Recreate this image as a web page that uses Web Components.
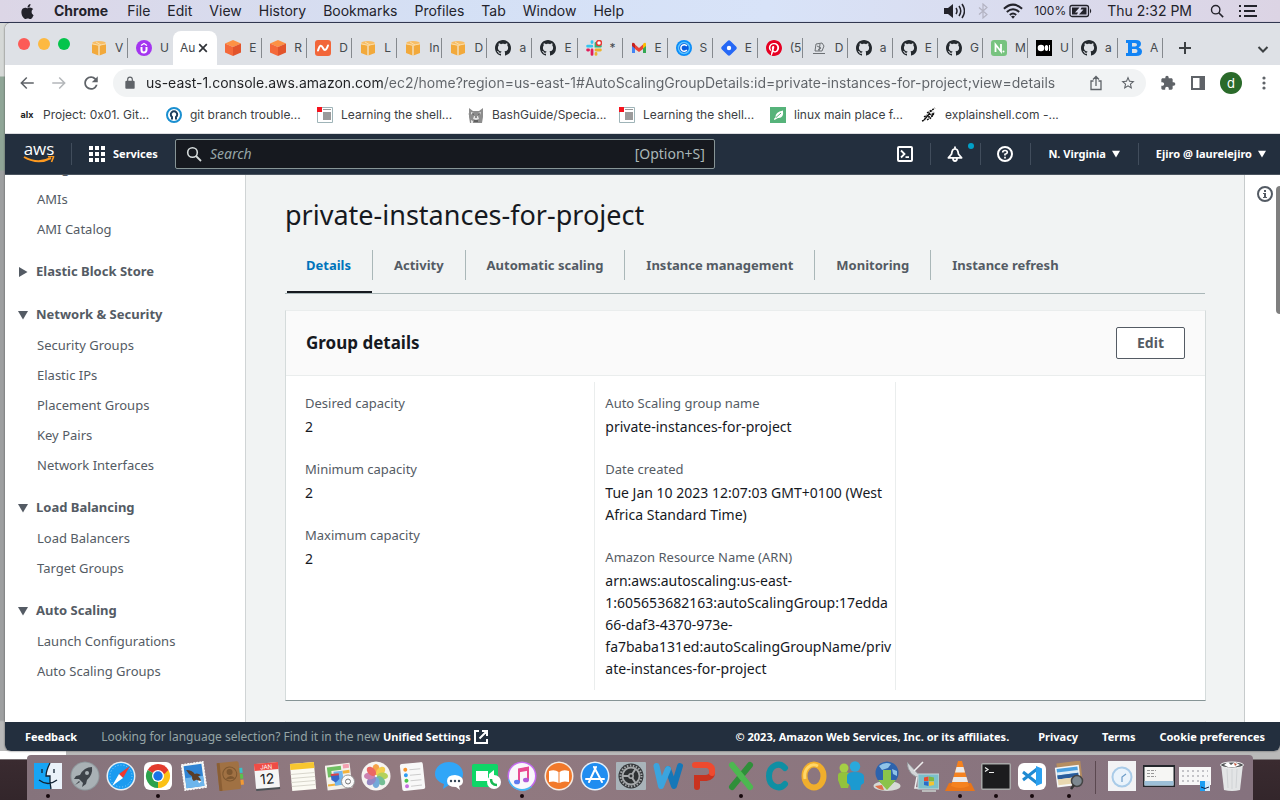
<!DOCTYPE html>
<html lang="en">
<head>
<meta charset="utf-8">
<title>private-instances-for-project | Auto Scaling groups</title>
<style>
html{height:100%}
body{margin:0;height:100vh;display:flex;flex-direction:column;overflow:hidden;
  font:13px/20px Inter,"Noto Sans",sans-serif;color:#16191f;
  background:linear-gradient(90deg,#fff 0 66px,transparent 66px) 0 751px/100% 8px no-repeat,linear-gradient(#d5d8d6 0 76px,#8fa596 77px 170px,#9d9fa0 171px 720px,#b9b9b9 722px 759px,#3a2b30 760px,#33262b)}
browser-window{flex:1;min-height:0;margin-left:5px}
mac-dock{margin:4px 27px 0}
</style>
</head>
<body>
<mac-menubar></mac-menubar>
<browser-window>
  <tab-strip slot="chrome"></tab-strip>
  <browser-toolbar slot="chrome"></browser-toolbar>
  <bookmark-bar slot="chrome"></bookmark-bar>
  <aws-header></aws-header>
  <aws-layout>
    <side-nav slot="nav"></side-nav>
    <group-page></group-page>
  </aws-layout>
  <aws-footer></aws-footer>
</browser-window>
<mac-dock></mac-dock>

<script>
const ICONS = {
apple:[24,'<path fill="#23232b" d="M12.152 6.896c-.948 0-2.415-1.078-3.96-1.04-2.04.027-3.91 1.183-4.961 3.014-2.117 3.675-.546 9.103 1.519 12.09 1.013 1.454 2.208 3.09 3.792 3.039 1.52-.065 2.09-.987 3.935-.987 1.831 0 2.35.987 3.96.948 1.637-.026 2.676-1.48 3.676-2.948 1.156-1.688 1.636-3.325 1.662-3.415-.039-.013-3.182-1.221-3.22-4.857-.026-3.04 2.48-4.494 2.597-4.559-1.429-2.09-3.623-2.324-4.39-2.376-2-.156-3.675 1.09-4.61 1.09zM15.53 3.83c.843-1.012 1.4-2.427 1.245-3.83-1.207.052-2.662.805-3.532 1.818-.78.896-1.454 2.338-1.273 3.714 1.338.104 2.715-.688 3.559-1.701"/>'],
volume:[22,'<path fill="#23232b" d="M1 8h4l5-4v14l-5-4H1z"/><g fill="none" stroke="#23232b" stroke-width="1.500"><path d="M13 8q2 3 0 6M16 6q3.500 5 0 10M19 4q5 7 0 14"/></g>'],
bluetooth:[16,'<path fill="none" stroke="#b3b3c2" stroke-width="1.200" d="M4 4.500l8 7L8 15V1l4 3.500-8 7"/>'],
wifi:[22,'<g fill="none" stroke="#23232b" stroke-width="2.200"><path d="M1 8.500q10-9 20 0M4.200 12q6.800-6 13.600 0M7.500 15.300q3.500-3 7 0"/></g><path fill="#23232b" d="M8.800 17l2.200 2.500 2.200-2.500q-2.200-1.700-4.400 0z"/>'],
battery:[24,'<rect x="1" y="6.500" width="18.500" height="11" rx="2" fill="none" stroke="#23232b" stroke-width="1.300"/><path fill="#23232b" d="M3 8.500h7.500l-4.500 5h3l-1 2H3zM17.500 15.500H10l4.500-5h-3l1-2h5zM21 9.500q2.500 2.500 0 5z"/>'],
search:[16,'<circle cx="6.500" cy="6.500" r="4.800" fill="none" stroke="currentColor" stroke-width="1.600"/><path stroke="currentColor" stroke-width="1.800" d="M10 10l5 5"/>'],
menu:[18,'<path fill="#23232b" d="M0 3h2v2H0zM5 3h13v2H5zM0 8h2v2H0zM5 8h11v2H5zM0 13h2v2H0zM5 13h13v2H5z"/>'],
github:[16,'<path fill="#24292e" d="M8 0C3.58 0 0 3.58 0 8c0 3.54 2.29 6.53 5.47 7.59.4.07.55-.17.55-.38 0-.19-.01-.82-.01-1.49-2.01.37-2.53-.49-2.69-.94-.09-.23-.48-.94-.82-1.13-.28-.15-.68-.52-.01-.53.63-.01 1.08.58 1.23.82.72 1.21 1.87.87 2.33.66.07-.52.28-.87.51-1.07-1.78-.2-3.64-.89-3.64-3.95 0-.87.31-1.59.82-2.15-.08-.2-.36-1.02.08-2.12 0 0 .67-.21 2.2.82.64-.18 1.32-.27 2-.27.68 0 1.36.09 2 .27 1.53-1.04 2.2-.82 2.2-.82.44 1.1.16 1.92.08 2.12.51.56.82 1.27.82 2.15 0 3.07-1.87 3.75-3.65 3.95.29.25.54.73.54 1.48 0 1.07-.01 1.93-.01 2.2 0 .21.15.46.55.38A8.013 8.013 0 0016 8c0-4.42-3.58-8-8-8z"/>'],
aws:[16,'<path fill="#f7bd65" d="M1 3.500Q1 1 8 1t7 2.500L8 6z"/><path fill="#f2a93b" d="M1 4l6.500 1.500V15.500L1 13zM15 4L8.500 5.500V15.500L15 13z"/><path stroke="#fbdca6" fill="none" d="M1 3.800L8 5.300l7-1.500M8 5.300V16M5 2l5 3"/>'],
ec2:[16,'<path fill="#fd9144" d="M8 0l8 3.500L8 7 0 3.500z"/><path fill="#f4693a" d="M0 3.500L8 7v9l-8-3.500z"/><path fill="#e2542c" d="M16 3.500L8 7v9l8-3.500z"/>'],
udemy:[16,'<circle cx="8" cy="8" r="8" fill="#a435f0"/><path fill="none" stroke="#fff" stroke-width="2" d="M5.500 7v3a2.500 2.500 0 005 0V7"/><path fill="none" stroke="#fff" stroke-width="1.200" d="M5 5.500l3-2 3 2"/>'],
nami:[16,'<rect width="16" height="16" rx="3" fill="#f2663a"/><path fill="none" stroke="#fff" stroke-width="2" stroke-linecap="round" d="M3 10.500C5 4 6.500 5 8 8s3 3 5-2.500"/>'],
slack:[16,'<g stroke-width="2.800" stroke-linecap="round"><path stroke="#36c5f0" d="M6 1.600v1M1.600 6.200h4.200"/><path stroke="#2eb67d" fill="none" d="M10 3.500v2.700h4.400"/><path stroke="#e01e5a" d="M6 10v4.400M1.600 10h1"/><path stroke="#ecb22e" d="M10 14.400v-1M10 10h4.400"/></g><circle cx="13" cy="3" r="2.500" fill="#fff" stroke="#e53935" stroke-width="1.500"/>'],
gmail:[16,'<path fill="#4285f4" d="M1 4v9h3V6z"/><path fill="#34a853" d="M15 4v9h-3V6z"/><path fill="#ea4335" d="M4 9V4.500L8 8l4-3.500V9l-4 3z"/><path fill="#c5221f" d="M1 4q0-2 2-1l1 1v4.500L1 6z"/><path fill="#fbbc04" d="M15 4q0-2-2-1l-1 1v4.500L15 6z"/>'],
calendly:[16,'<circle cx="8" cy="8" r="8" fill="#0a8cf8"/><circle cx="8" cy="8" r="5.500" fill="#0a5cdf" stroke="#5cc4ff" stroke-width="1.500"/><path fill="none" stroke="#fff" stroke-width="1.500" d="M10.800 6a3.300 3.300 0 100 4"/>'],
jira:[16,'<rect x="2" y="2" width="12" height="12" rx="2" fill="#2668f6" transform="rotate(45 8 8)"/><circle cx="8" cy="8" r="2.200" fill="#fff"/>'],
pinterest:[24,'<circle cx="12" cy="12" r="11" fill="#fff"/><path fill="#e60023" d="M12 0C5.373 0 0 5.372 0 12c0 5.084 3.163 9.426 7.627 11.174-.105-.949-.2-2.405.042-3.441.218-.937 1.407-5.965 1.407-5.965s-.359-.719-.359-1.782c0-1.668.967-2.914 2.171-2.914 1.023 0 1.518.769 1.518 1.69 0 1.029-.655 2.568-.994 3.995-.283 1.194.599 2.169 1.777 2.169 2.133 0 3.772-2.249 3.772-5.495 0-2.873-2.064-4.882-5.012-4.882-3.414 0-5.418 2.561-5.418 5.207 0 1.031.397 2.138.893 2.738.098.119.112.224.083.345l-.333 1.36c-.053.22-.174.267-.402.161-1.499-.698-2.436-2.889-2.436-4.649 0-3.785 2.75-7.262 7.929-7.262 4.163 0 7.398 2.967 7.398 6.931 0 4.136-2.607 7.464-6.227 7.464-1.216 0-2.359-.631-2.75-1.378l-.748 2.853c-.271 1.043-1.002 2.35-1.492 3.146C9.57 23.812 10.763 24 12 24c6.627 0 12-5.373 12-12 0-6.628-5.373-12-12-12z"/>'],
sketch:[16,'<g fill="none" stroke="#6c7074"><path d="M2 13.500h12M4 11l1-7 6-1 2 3-2 5zM6 6l4 2-3 2M9 4l-1 7"/></g>'],
nlet:[16,'<rect width="16" height="16" rx="3" fill="#77c37f"/><path stroke="#fff" stroke-width="1.800" fill="none" d="M4.500 12V4.500l5.500 7V4"/><circle cx="12.500" cy="11.500" r="1" fill="#fff"/>'],
medium:[16,'<rect width="16" height="16" fill="#000"/><circle cx="5" cy="8" r="3.300" fill="#fff"/><ellipse cx="10.500" cy="8" rx="1.700" ry="3" fill="#fff"/><path stroke="#fff" d="M13.500 5v6"/>'],
bmark:[16,'<path fill="#1183f5" fill-rule="evenodd" d="M0 0h10q5 0 5 4 0 2.500-2.500 3.500Q16 8.500 16 11.500 16 16 10 16H0v-3h2V3H0zM6 3v3.500h3q2 0 2-1.700T9 3zM6 9v4h3.500q2 0 2-2T9.500 9z"/>'],
close:[10,'<path stroke="#303338" stroke-width="1.700" d="M1.200 1.200l7.600 7.600M8.800 1.200L1.200 8.800"/>'],
plus:[14,'<path stroke="#3c4043" stroke-width="2" d="M7 1v12M1 7h12"/>'],
chevron:[12,'<path fill="none" stroke="#3c4043" stroke-width="2" d="M1.500 4L6 8.500 10.500 4"/>'],
back:[24,'<path fill="currentColor" d="M21 11H6.830l5.590-5.590L11 4l-8 8 8 8 1.410-1.410L6.830 13H21z"/>'],
forward:[24,'<path fill="#b4b7ba" d="M3 11h14.170l-5.590-5.590L13 4l8 8-8 8-1.410-1.410L17.170 13H3z"/>'],
reload:[24,'<path fill="currentColor" d="M18.500 5.500A9 9 0 0012 3c-5 0-9 4-9 9s4 9 9 9c4.200 0 7.700-2.900 8.700-6.800h-2.400A6.700 6.700 0 0112 18.700 6.700 6.700 0 1112 5.300c1.900 0 3.600.8 4.800 2L13 11h8V3z"/>'],
lock:[24,'<path fill="#5f6368" d="M18 8h-1V6A5 5 0 007 6v2H6a2 2 0 00-2 2v10c0 1.100.9 2 2 2h12a2 2 0 002-2V10a2 2 0 00-2-2zM9 6a3 3 0 016 0v2H9z"/>'],
share:[16,'<path fill="none" stroke="#5f6368" stroke-width="1.300" d="M5.500 6H3v8.500h10V6h-2.500M8 11V1.800M5 4.500l3-3 3 3"/>'],
star:[24,'<path fill="#5f6368" d="M22 9.240l-7.190-.620L12 2 9.190 8.630 2 9.240l5.460 4.730L5.820 21 12 17.270 18.180 21l-1.630-7.030zM12 15.400l-3.760 2.270 1-4.280-3.320-2.880 4.380-.380L12 6.100l1.710 4.040 4.380.380-3.320 2.880 1 4.280z"/>'],
puzzle:[24,'<path fill="#5f6368" d="M20.500 11H19V7c0-1.100-.9-2-2-2h-4V3.500a2.500 2.500 0 00-5 0V5H4c-1.100 0-1.990.9-1.990 2v3.800H3.500c1.490 0 2.700 1.210 2.700 2.700s-1.210 2.700-2.700 2.700H2V20c0 1.100.9 2 2 2h3.800v-1.500c0-1.490 1.210-2.700 2.700-2.700s2.700 1.210 2.700 2.700V22H17c1.100 0 2-.9 2-2v-4h1.500a2.500 2.500 0 000-5z"/>'],
panel:[16,'<path fill="#5f6368" fill-rule="evenodd" d="M1 1h14v14H1zM3 3v10h6.500V3z"/>'],
dots:[16,'<g fill="#5f6368"><circle cx="8" cy="3" r="1.600"/><circle cx="8" cy="8" r="1.600"/><circle cx="8" cy="13" r="1.600"/></g>'],
dtown:[16,'<circle cx="8" cy="8" r="7" fill="#fff" stroke="#1a8fd0" stroke-width="2"/><path fill="none" stroke="#1d3f5e" stroke-width="2" d="M6 12.500V10a3.200 3.200 0 114 0v2.500"/>'],
doc:[16,'<path fill="#fff" stroke="#9fb4b8" d="M.5.5h15v15H.5z"/><path fill="#f5121d" d="M0 0h5v5H0z"/><path stroke="#999" d="M6 2.500h8"/><path fill="#9b9b9b" d="M6 5h8v8H6z"/>'],
cat:[16,'<path fill="#8d8d8d" d="M1 1l4 3h6l4-3v9l-1 6H2l-1-6z"/><path fill="#e2e2e2" d="M3 5l3 1-1 2-2-1zM10 6l3-1-1 3-2-1zM6 9h4l1 3-3 1-3-1zM0 6h1v2H0zM3 13l2 1v2H3z"/><path stroke="#333" d="M4 7h2M10 7h2M7 10h2M6 14h4" fill="none"/>'],
leaf:[16,'<rect width="16" height="16" fill="#56b37a"/><path fill="#fff" d="M13 3.500q1 8-5 7.500L4.500 13 3.800 12l1.700-1.500Q5 5 13 3.500z"/><path stroke="#56b37a" d="M6 10.500l5-4.500"/>'],
shell:[16,'<path fill="none" stroke="#111" stroke-width="1.400" stroke-dasharray="2 1" d="M1 14l3-1M3 10l3-2M6 13l3-2M4 12l7-9M6 6l5-3 3-2M8 7l3 1 1-3M7 10l5-1 1-4M3 13l6-7M9 12l3-5"/>'],
smile:[32,'<path fill="none" stroke="#ff9a1f" stroke-width="2" d="M1 1q14 8 27 1"/><path fill="none" stroke="#ff9a1f" stroke-width="1.600" d="M25 .8q6-1.300 5.500.2T28.500 6"/>'],
grid:[16,'<path fill="#fff" d="M0 0h4v4H0zM6 0h4v4H6zM12 0h4v4h-4zM0 6h4v4H0zM6 6h4v4H6zM12 6h4v4h-4zM0 12h4v4H0zM6 12h4v4H6zM12 12h4v4h-4z"/>'],
cloudshell:[16,'<rect x="1" y="1" width="14" height="14" rx="1" fill="none" stroke="#fff" stroke-width="2"/><path fill="none" stroke="#fff" stroke-width="1.800" d="M4 4.500L7.500 8 4 11.500M8.500 11.200H12"/>'],
bell:[16,'<path fill="none" stroke="#fff" stroke-width="1.800" stroke-linejoin="round" d="M8 .5v2M8 2.800c-3 0-3.200 2.400-3.400 5.200L1.400 11.800h13.200L11.400 8c-.2-2.800-.4-5.200-3.400-5.200zM6 12.500q0 2.500 2 2.500t2-2.500"/>'],
help:[16,'<circle cx="8" cy="8" r="7" fill="none" stroke="#fff" stroke-width="2"/><path fill="none" stroke="#fff" stroke-width="1.700" d="M5.700 6.500q0-2 2.300-2t2.300 1.800Q10.300 7.700 8 8.300V9.500M8 10.800v1.700"/>'],
caret:[10,'<path fill="currentColor" d="M0 1h10L5 9.500z"/>'],
caretr:[10,'<path fill="currentColor" d="M1 0v10l8.500-5z"/>'],
info:[16,'<circle cx="8" cy="8" r="7" fill="none" stroke="#545b64" stroke-width="2"/><path fill="#545b64" d="M7 4h2v2H7zM6 7h3v4h1v1H6v-1h1V8H6z"/>'],
external:[16,'<path fill="none" stroke="#fff" stroke-width="2" d="M6 2H2v12h12v-4M9 2h5v5M14 2L6.500 9.500"/>'],
/* dock applications */
finder:[30,'<rect x="1" y="2" width="28" height="26" fill="#eaf2fa"/><path fill="#16a5f5" d="M1 2h16q-4 8-4 13h4q-.5 6 1 13H1z"/><path fill="none" stroke="#123" stroke-width="1.300" d="M17 2q-4 8-4 13h4q-.5 6 1 13M6 19q9 7 18 0M9 8v4M21 8v4"/>'],
launchpad:[30,'<circle cx="15" cy="15" r="14.500" fill="#8f989d"/><circle cx="15" cy="15" r="13.500" fill="#a9b1b5"/><path fill="#3d4349" d="M22 6q-8 0-12 8l-4 1-2 3 5 0 4 4-1 4 4-3 1-4q6-5 5-13z"/><circle cx="17" cy="12" r="2" fill="#a9b1b5"/><path fill="#3d4349" d="M5 24l4-4 1 1z"/>'],
safari:[30,'<circle cx="15" cy="15" r="14.500" fill="#e8eef2"/><circle cx="15" cy="15" r="13" fill="#1b9bf0"/><circle cx="15" cy="15" r="11" fill="none" stroke="#8fd0fa" stroke-dasharray="1 2"/><path fill="#f2382f" d="M24 5l-7 12-4-4z"/><path fill="#fff" d="M6 25l7-12 4 4z"/>'],
chrome:[30,'<rect x="1" y="1" width="28" height="28" rx="6" fill="#fff"/><path fill="#e33b2e" d="M15 15L4.600 9a12 12 0 0120.800 0z"/><path fill="#fbc116" d="M15 15l10.400-6A12 12 0 0115 27z"/><path fill="#2ca24c" d="M15 15v12A12 12 0 014.600 9z"/><path fill="#e33b2e" d="M15 9h10.400l-4 4z"/><circle cx="15" cy="15" r="6" fill="#fff"/><circle cx="15" cy="15" r="4.700" fill="#1a73e8"/>'],
mail:[30,'<g transform="rotate(-8 15 15)"><rect x="4" y="2" width="22" height="26" fill="#f4f4f2" stroke="#fff" stroke-dasharray="2 1"/><rect x="6" y="4" width="18" height="22" fill="#2f83d3"/><path fill="#6db5ec" d="M6 16h18v10H6z"/><path fill="#5a3d28" d="M8 8q6 1 8 5 3-1 6 2l-3 1q3 3 2 6l-4-3-3 1q-2-2-1-5-3-2-5-7z"/><path fill="#fff" d="M18 20l4 1-3 2z"/></g>'],
contacts:[30,'<g transform="rotate(-6 15 15)"><path fill="#3ac0c8" d="M24 8h4v5h-4z"/><path fill="#5dc04c" d="M24 14h4v5h-4z"/><path fill="#f29a35" d="M24 20h4v5h-4z"/><rect x="3" y="1" width="22" height="28" rx="2" fill="#a07143"/><path fill="#8a5e34" d="M3 1h3v28H3z"/><circle cx="15" cy="13" r="7" fill="none" stroke="#7d5730"/><circle cx="15" cy="11" r="3" fill="#7d5730"/><path fill="#7d5730" d="M10 18q5-6 10 0z"/></g>'],
calendar:[30,'<g transform="rotate(-5 15 15)"><rect x="3" y="2" width="24" height="26" rx="2" fill="#f5f5f5"/><path fill="#ef4c45" d="M3 2h24v7H3z"/><path fill="#4e5357" d="M3 27h24v2H3z"/><text x="15" y="8" text-anchor="middle" font-family="Inter" font-size="6" fill="#fff">JAN</text><text x="15" y="23" text-anchor="middle" font-family="Inter" font-size="14" fill="#222">12</text></g>'],
notes:[30,'<g transform="rotate(-5 15 15)"><rect x="3" y="2" width="24" height="27" fill="#fbfaf3"/><path fill="#f7c62f" d="M3 2h24v6H3z"/><path stroke="#d8d6cc" d="M3 12.500h24M3 16.500h24M3 20.500h24M3 24.500h24"/></g>'],
maps:[30,'<g transform="rotate(-7 15 15)"><rect x="1" y="3" width="25" height="25" fill="#f3f1ea"/><path fill="#6fbf62" d="M3 5h14v4H3zM3 5h4v10H3z"/><path fill="#f3b33c" d="M2 22h18v2H2zM18 10h7v3h-7z"/><path fill="#6fb4ee" d="M9 10h9v14H9z"/><path fill="#3567c8" d="M6 13h8v5l-4 3-4-3z"/><path fill="#d8454a" d="M6 12h8v2H6z"/><path fill="#f3a0b0" d="M19 4h6v4h-6z"/></g><circle cx="23" cy="20.500" r="6.500" fill="#fafafa" stroke="#999"/><circle cx="23" cy="20.500" r="2.500" fill="none" stroke="#777"/>'],
photos:[30,'<circle cx="15" cy="15" r="14.500" fill="#f6f4f1"/><g opacity=".85"><ellipse cx="15" cy="8.500" rx="3.600" ry="5.500" fill="#f6962e"/><ellipse cx="15" cy="8.500" rx="3.600" ry="5.500" fill="#f3c832" transform="rotate(45 15 15)"/><ellipse cx="15" cy="8.500" rx="3.600" ry="5.500" fill="#a9cc41" transform="rotate(90 15 15)"/><ellipse cx="15" cy="8.500" rx="3.600" ry="5.500" fill="#5fb585" transform="rotate(135 15 15)"/><ellipse cx="15" cy="8.500" rx="3.600" ry="5.500" fill="#5d9dd5" transform="rotate(180 15 15)"/><ellipse cx="15" cy="8.500" rx="3.600" ry="5.500" fill="#8474bb" transform="rotate(225 15 15)"/><ellipse cx="15" cy="8.500" rx="3.600" ry="5.500" fill="#c56fa6" transform="rotate(270 15 15)"/><ellipse cx="15" cy="8.500" rx="3.600" ry="5.500" fill="#ea4f4c" transform="rotate(315 15 15)"/></g>'],
reminders:[30,'<g transform="rotate(-6 15 15)"><rect x="3" y="2" width="23" height="27" rx="2" fill="#f8f8f8"/><circle cx="8" cy="8" r="2" fill="#f7932d"/><circle cx="8" cy="13.500" r="2" fill="#2f9cf1"/><circle cx="8" cy="19" r="2" fill="#4bc54b"/><circle cx="8" cy="24.500" r="2" fill="#c56de0"/><path stroke="#ccc" d="M12 8.500h11M12 14h11M12 19.500h11M12 25h11"/></g>'],
messages:[30,'<path fill="#31a6f8" d="M15 1c8 0 14 5 14 12s-6 11-14 11l-6 4 1-5C4 21 1 17 1 13 1 6 7 1 15 1z"/><path fill="#fff" d="M21 14q8 1 8 6 0 4-4 5l1 4-4-3q-9 0-9-6 0-6 8-6z"/><g fill="#345"><circle cx="17" cy="20" r="1.200"/><circle cx="21" cy="20" r="1.200"/><circle cx="25" cy="20" r="1.200"/></g>'],
facetime:[30,'<rect x="1" y="3" width="26" height="23" rx="2" fill="#0fd667"/><path fill="#fff" d="M5 10h12v10H5zM18 13l5-4v11l-5-3z"/><circle cx="23" cy="21" r="7" fill="#fff"/><path fill="none" stroke="#18b954" stroke-width="2.500" d="M20 18q0 6 6 6"/>'],
itunes:[30,'<circle cx="15" cy="15" r="14.500" fill="#c46af0"/><path fill="#45b6f2" d="M1 18a14.500 14.500 0 0024 8z"/><circle cx="15" cy="15" r="13" fill="#f9f7fb"/><path fill="none" stroke="#e94b92" stroke-width="2" d="M12 21V9l9-2v12"/><path fill="#e94b92" d="M11 7.500l11-2v4l-11 2z"/><ellipse cx="10" cy="21" rx="3" ry="2.300" fill="#5f7cf0"/><ellipse cx="19" cy="19" rx="3" ry="2.300" fill="#b05bd8"/>'],
ibooks:[30,'<circle cx="15" cy="15" r="14.500" fill="#f4ebe4"/><circle cx="15" cy="15" r="13" fill="#f2792b"/><path fill="#fff" d="M5 10q6-2 9.500 1v11Q11 19.500 5 21zM25 10q-6-2-9.500 1v11q3.500-2.500 9.500-1z"/>'],
appstore:[30,'<circle cx="15" cy="15" r="14.500" fill="#e8f2fa"/><circle cx="15" cy="15" r="13" fill="#1f8df0"/><path stroke="#fff" stroke-width="2" stroke-linecap="round" d="M16 6L9 21M14 6l8 15M6 18h18"/>'],
settings:[30,'<rect x="0" y="1" width="30" height="28" rx="1" fill="#a9b4ba"/><circle cx="15" cy="15" r="12.500" fill="#333639"/><circle cx="15" cy="15" r="10.500" fill="none" stroke="#a5a8aa" stroke-width="2" stroke-dasharray="1.500 1.500"/><circle cx="15" cy="15" r="8.500" fill="#2e3133" stroke="#a5a8aa" stroke-width="1.800"/><path stroke="#a5a8aa" stroke-width="2" d="M15 15H7M15 15l4.500-7M15 15l4.500 7"/><circle cx="15" cy="15" r="2.200" fill="#2e3133" stroke="#a5a8aa" stroke-width="1.500"/>'],
word:[30,'<path fill="none" stroke="#1577b8" stroke-width="6" stroke-linecap="round" stroke-linejoin="round" d="M15 8l6 17 6-20"/><path fill="none" stroke="#3ba4de" stroke-width="6" stroke-linecap="round" stroke-linejoin="round" d="M3.500 5l4.500 20 7-17"/>'],
powerpoint:[30,'<path fill="none" stroke="#c9321f" stroke-width="6" stroke-linecap="round" d="M8 26V17h9q6-1 6-5"/><path fill="none" stroke="#ee4a2f" stroke-width="6" stroke-linecap="round" d="M6 4h12q6 1 5 8"/>'],
excel:[30,'<path stroke="#2f8f3a" stroke-width="6" stroke-linecap="round" d="M24 4L6 26"/><path stroke="#4cb850" stroke-width="6" stroke-linecap="round" d="M6 4l18 22"/>'],
communicator:[30,'<path fill="none" stroke="#0f8fa3" stroke-width="6" stroke-linecap="round" d="M23 7C17 0 7 5 7 15s10 15 16 8"/>'],
outlook:[30,'<ellipse cx="15" cy="15" rx="9.500" ry="11.500" fill="none" stroke="#f0ae2c" stroke-width="6"/><path fill="none" stroke="#ffd768" stroke-width="3" d="M6 18C4 8 12 1 19 5"/>'],
people:[30,'<circle cx="9" cy="7" r="4.500" fill="#a5cf45"/><path fill="#93c23c" d="M3 14q0-3 6-3t6 3v6l-2 7H6l-3-8z"/><circle cx="20" cy="5.500" r="5.200" fill="#2aa9dc"/><path fill="#1c9ad0" d="M12 15q0-4 8-4t9 4v7l-3 2-1 5h-9l-1-5-3-2z"/>'],
download:[30,'<ellipse cx="15" cy="25" rx="13.500" ry="5" fill="#d6dad6"/><path fill="#e0714a" d="M3 25q4 4 9 4l-2-5z"/><circle cx="15" cy="12" r="11.500" fill="#2d63ad"/><path fill="#8fc3e8" d="M7 5q6-5 12-2l-3 4-6 2zM20 8l5 2v5l-4-2z"/><path fill="#8bc34a" d="M11 9h8v10h5l-9 10-9-10h5z"/>'],
remote:[32,'<path fill="#d3d6d8" stroke="#8d9295" stroke-width=".8" d="M0 1q1 15 15 16z"/><path stroke="#eee" stroke-width="1.500" fill="none" d="M7 10L16 1M10 16l-2 11h14"/><rect x="11" y="13" width="21" height="15" fill="#7cc0cb" stroke="#c9d6d9"/><path fill="#e94b2c" d="M17 16.500l4.500-1v4.500H17z"/><path fill="#7db843" d="M22 15.500l5 1V20h-5z"/><path fill="#2c6cc8" d="M17 20.500h4.500V25l-4.500-1z"/><path fill="#f4c430" d="M22 20.500h5V24l-5 1z"/><path fill="#bbb" d="M15 29h14v2H15z"/>'],
vlc:[30,'<path fill="#e8751a" d="M4 22h22l4 8H0z"/><path fill="#f5821f" d="M13 0h4l7 25q-9 4-18 0z"/><path fill="#e9e9e9" d="M11.500 6h7l1.500 5.500h-10zM8.500 16h13l1.500 5H7z"/>'],
terminal:[30,'<rect x="0" y="2" width="30" height="27" rx="2" fill="#a9a9a9"/><rect x="1.500" y="3.500" width="27" height="24" fill="#1c1c1e"/><path fill="none" stroke="#eee" stroke-width="1.200" d="M4 6.500l3 2-3 2M8 11.500h5"/>'],
vscode:[30,'<rect x="1" y="2" width="28" height="27" rx="6" fill="#fff"/><path fill="none" stroke="#1f8ad2" stroke-width="3" stroke-linejoin="round" d="M20 8L6 19M20 22L6 11"/><path fill="#2aa0f0" d="M19 5l6 2.500v15L19 25z"/>'],
preview:[30,'<g transform="rotate(-7 15 15)"><rect x="4" y="1" width="24" height="18" fill="#b58d60"/><rect x="2" y="5" width="24" height="20" fill="#f5f5f5"/><path fill="#4aa0e0" d="M3.500 6.500h21V16h-21z"/><path fill="#dcecf6" d="M3.500 10h21v3h-21z"/><path fill="#2a5c9a" d="M3.500 13h21v4h-21z"/><path fill="#e8d7b0" d="M3.500 17h21v6h-21z"/></g><circle cx="23" cy="20" r="5.500" fill="#7d8890" stroke="#444" stroke-width="1.500"/><path stroke="#333" stroke-width="2.500" d="M20 24l-3 4"/>'],
clockfile:[30,'<rect x="1" y="0" width="28" height="30" fill="#f2f2f4"/><circle cx="15" cy="16" r="9.500" fill="#eaf3fb" stroke="#a9cbe8" stroke-width="2"/><path fill="none" stroke="#6c9cc8" stroke-width="1.200" d="M15 21v-5l4-3"/>'],
window1:[32,'<rect x="0" y="4" width="32" height="22" fill="#23262b"/><rect x="1.500" y="6" width="29" height="18.500" fill="#f6f6f4"/><path fill="#9dc0d8" d="M1.500 20h29v4.500h-29z"/><path stroke="#999" stroke-dasharray="3 1" d="M4 9.500h9M4 12.500h8M4 15.500h9"/>'],
window2:[32,'<rect x="0" y="6" width="32" height="18" fill="#f7f7f7"/><path stroke="#c4c4c8" stroke-width="2" stroke-dasharray="2 3" d="M3 10h26M3 15h26M3 20h18"/><path fill="#1b9ef3" d="M21 20h5v10h-5z"/><path fill="#d4ebfb" d="M26 20h5v10h-5z"/><path fill="none" stroke="#124" d="M22 26q4 3 8 0"/>'],
trash:[30,'<path fill="#e3e5e6" d="M4 3h22l-3 26q-8 2-16 0z"/><path stroke="#d0d3d5" d="M10 8l1 19M15 8v20M20 8l-1 19" fill="none"/><ellipse cx="15" cy="4" rx="11.500" ry="3" fill="#55585a" stroke="#f1f1f1"/><path fill="#fff" d="M7 4l4-3 3 3 4-3 5 3-5 2H11z"/><path fill="#c0553a" d="M17 2l3 1-2 2z"/>']
};

const define = (name, css, html) => customElements.define(name, class extends HTMLElement {
  constructor(){
    super();
    const t = document.createElement('template');
    t.innerHTML = `<style>:host,*{box-sizing:border-box}a{color:inherit;text-decoration:none}button{font:inherit;color:inherit;background:none;border:0;padding:0;margin:0}${css}</style>${html}`;
    this.attachShadow({mode:'open'}).append(t.content.cloneNode(true));
  }
});

customElements.define('ui-icon', class extends HTMLElement {
  static observedAttributes = ['name','size'];
  constructor(){ super(); this.attachShadow({mode:'open'}); }
  attributeChangedCallback(){ this.draw(); }
  draw(){
    const def = ICONS[this.getAttribute('name')];
    if (!def) return;
    const s = this.getAttribute('size') || 16;
    this.shadowRoot.innerHTML = `<style>:host{display:inline-block;flex:none;width:${s}px;height:${s}px}svg{display:block}</style><svg width="${s}" height="${s}" viewBox="0 0 ${def[0]} ${def[0]}" aria-hidden="true">${def[1]}</svg>`;
  }
});
const ic = (n,s=16) => `<ui-icon name="${n}" size="${s}"></ui-icon>`;

define('mac-menubar', `
:host{display:flex;align-items:center;justify-content:space-between;flex:none;height:23px;padding:0 23px 0 20px;
 border-bottom:1px solid #2b3355;background:linear-gradient(90deg,#dcd6e6,#d4e0f5 35%,#d8e3f8 60%,#dcd4e4);font-size:14px;color:#23232b}
nav,div{display:flex;align-items:center}
nav{gap:17px} b{font-weight:700;margin:0 2px}
.bt{margin:0 12px 0 10px}.small{font-size:12px;margin:0 3px 0 11px}.time{margin:0 18px 0 14px}.m{margin-left:15px}`,
`<nav>${ic('apple',15)}<b>Chrome</b>${['File','Edit','View','History','Bookmarks','Profiles','Tab','Window','Help'].map(t=>`<span>${t}</span>`).join('')}</nav>
<div>${ic('volume',22)}<ui-icon class="bt" name="bluetooth" size="16"></ui-icon>${ic('wifi',20)}<span class="small">100%</span>${ic('battery',24)}<span class="time">Thu 2:32 PM</span>${ic('search',14)}<ui-icon class="m" name="menu" size="18"></ui-icon></div>`);

define('browser-window', `
:host{display:flex;flex-direction:column;overflow:hidden;background:#fff;border-radius:6px 0 6px 6px;box-shadow:0 0 2px #444}
::slotted(aws-layout){flex:1;min-height:0}`,
`<slot name="chrome"></slot><slot></slot>`);

const TABS = [['aws','V'],['udemy','U'],['','Au'],['ec2','E'],['ec2','R'],['nami','D'],['aws','L'],['aws','In'],['aws','D'],['github','a'],['github','E'],['slack','*'],['gmail','E'],['calendly','S'],['jira','E'],['pinterest','(5'],['sketch','D'],['github','a'],['github','E'],['github','G'],['nlet','M'],['medium','U'],['github','a'],['bmark','A']];
define('tab-strip', `
:host{display:flex;align-items:flex-end;flex:none;height:42px;background:#dee1e6;padding:0 11px 0 13px;font-size:12px;color:#45494d}
.lights{display:flex;gap:8px;width:65px;height:34px;padding-top:7px;flex:none}
.lights i{width:12px;height:12px;border-radius:50%}
.tabs{display:flex;flex:0 1 1080px;min-width:0}
.tab{display:flex;align-items:center;gap:8px;flex:1;height:34px;padding-left:8px;position:relative;min-width:0}
.tab::after{content:"";position:absolute;right:0;top:7px;height:20px;border-right:1px solid #85898e}
.tab span{white-space:nowrap}
.active{background:#fff;border-radius:8px 8px 0 0;gap:3px;padding-left:7px}
.active::after,.next::after{border:0}
button{display:flex;flex:none}
.plus{margin:0 0 10px 15px}.down{margin:0 0 10px auto}`,
`<div class="lights"><i style="background:#fc5b57"></i><i style="background:#fdb941"></i><i style="background:#04c44b"></i></div>
<div class="tabs" role="tablist">${TABS.map(([i,t],n)=>`<div role="tab" class="tab ${n==2?'active':n==1?'next':''}">${i?ic(i):''}<span>${t}</span>${n==2?ic('close',10):''}</div>`).join('')}</div>
<button class="plus" aria-label="New tab">${ic('plus',14)}</button><button class="down" aria-label="Search tabs">${ic('chevron',12)}</button>`);

define('browser-toolbar', `
:host{display:flex;align-items:center;flex:none;height:36px;padding:0 8px 0 13px;gap:14px;color:#5f6368}
button{display:flex;flex:none}
.nav{display:flex;gap:14px}
.omni{display:flex;align-items:center;flex:1;height:28px;border-radius:14px;background:#f1f3f4;padding:0 10px;margin-left:-1px}
input{flex:1;min-width:0;border:0;padding:0;margin:0 16px 0 9px;font:14px/20px Inter,sans-serif;outline:0;
 background:linear-gradient(90deg,#202124 237px,#5f6368 237px);-webkit-background-clip:text;background-clip:text;-webkit-text-fill-color:transparent}
.omni button+button{margin-left:16px}
.av{width:22px;height:22px;border-radius:50%;background:#2a6a2a;color:#fff;font-size:13px;line-height:22px;align-items:center;justify-content:center}
.end{display:flex;align-items:center;gap:14px}`,
`<div class="nav"><button aria-label="Back">${ic('back',18)}</button><button aria-label="Forward">${ic('forward',18)}</button><button aria-label="Reload">${ic('reload',18)}</button></div>
<div class="omni">${ic('lock',14)}<input aria-label="Address" value="us-east-1.console.aws.amazon.com/ec2/home?region=us-east-1#AutoScalingGroupDetails:id=private-instances-for-project;view=details"><button aria-label="Share">${ic('share',16)}</button><button aria-label="Bookmark">${ic('star',16)}</button></div>
<div class="end"><button aria-label="Extensions">${ic('puzzle',16)}</button><button aria-label="Side panel">${ic('panel',16)}</button><button class="av">d</button><button aria-label="Menu">${ic('dots',16)}</button></div>`);

define('bookmark-bar', `
:host{display:flex;flex:none;height:33px;padding:4px 0 0 14px;border-bottom:1px solid #dcdde0;font-size:12px;line-height:20px;color:#3c4043}
a{display:flex;align-items:center;gap:8px;height:20px;width:151px;white-space:nowrap;flex:none}
a:first-of-type{width:147px}
b{width:16px;font-size:9px;text-align:center;color:#222}`,
[['alx','Project: 0x01. Git...'],['dtown','git branch trouble...'],['doc','Learning the shell...'],['cat','BashGuide/Specia...'],['doc','Learning the shell...'],['leaf','linux main place f...'],['shell','explainshell.com -...']].map(([i,t])=>`<a href="#">${i=='alx'?'<b>alx</b>':ic(i)}<span>${t}</span></a>`).join(''));

define('aws-header', `
:host{display:flex;align-items:center;flex:none;height:41px;background:#232f3e;border-bottom:1px solid #4a545f;color:#fff;
 font:bold 11px/16px "Noto Sans",sans-serif;padding:0 14px 0 18px;white-space:nowrap}
.logo{display:flex;flex-direction:column;align-items:center;width:32px;height:24px}
.logo span{font:500 17px/14px "Open Sans",sans-serif;height:15px}
.sep{width:1px;height:22px;background:#414d5c;flex:none}
.logo+.sep{margin-left:16px}
button{display:flex;align-items:center}
.services{gap:8px;margin:0 17px}
label{display:flex;align-items:center;gap:8px;flex:0 1 540px;height:30px;border:1px solid #879596;border-radius:2px;background:#16191f;padding:0 9px 0 10px;color:#d5dbdb}
input{flex:1;min-width:0;border:0;background:none;padding:0;outline:0;font:italic 14px/20px "Noto Sans",sans-serif;color:#fff}
input::placeholder{color:#95a5a6;opacity:1}
.kbd{font:14px/20px "Noto Sans",sans-serif;color:#aab7b8}
.right{display:flex;align-items:center;margin-left:auto}
.i{padding:0 17px 0 16px;position:relative}
.dot::after{content:"";position:absolute;right:6px;top:-3px;width:6px;height:6px;border-radius:50%;background:#00a1c9}
.t{gap:6px;padding:0 18px 0 17px}.t:last-child{padding-right:0}`,
`<a class="logo" href="#"><span>aws</span><ui-icon name="smile" size="32"></ui-icon></a><span class="sep"></span>
<button class="services">${ic('grid',16)}Services</button>
<label>${ic('search',16)}<input type="search" placeholder="Search" aria-label="Search"><span class="kbd">[Option+S]</span></label>
<div class="right"><button class="i" aria-label="CloudShell">${ic('cloudshell')}</button><span class="sep"></span><button class="i dot" aria-label="Notifications">${ic('bell')}</button><span class="sep"></span><button class="i" aria-label="Help">${ic('help')}</button><span class="sep"></span><button class="t">N. Virginia ${ic('caret',8)}</button><span class="sep"></span><button class="t">Ejiro @ laurelejiro ${ic('caret',8)}</button></div>`);

define('aws-layout', `
:host{display:flex;overflow:hidden;position:relative;font-family:"Noto Sans",sans-serif}
.nav{width:241px;flex:none;background:#fff;border-right:1px solid #d0d4d5;overflow:hidden}
main{flex:1;min-width:0;background:#f1f3f3;overflow:hidden}
aside{width:36px;flex:none;background:#fff;border-left:1px solid #c7cbcc;padding:11px 0 0 12px;display:flex;gap:3px;align-items:flex-start;overflow:hidden}
i{width:8px;height:128px;border-radius:4px;background:#7f7f7f;flex:none}
button{display:flex}`,
`<div class="nav"><slot name="nav"></slot></div><main><slot></slot></main><aside><button aria-label="Info">${ic('info')}</button><i></i></aside>`);

const NAV = [['caret','Images',['AMIs','AMI Catalog']],['caretr','Elastic Block Store',[]],['caret','Network & Security',['Security Groups','Elastic IPs','Placement Groups','Key Pairs','Network Interfaces']],['caret','Load Balancing',['Load Balancers','Target Groups']],['caret','Auto Scaling',['Launch Configurations','Auto Scaling Groups']]];
define('side-nav', `
:host{display:block;margin-top:-22px;color:#545b64;font-size:13px}
section{margin-bottom:12px}
h3{display:flex;align-items:center;gap:8px;margin:0;padding-left:13px;height:31px;font-size:13px;line-height:31px;font-weight:700}
ul{list-style:none;margin:0;padding:0 0 0 32px}li{height:30px;line-height:30px}`,
NAV.map(([i,h,l])=>`<section><h3>${ic(i,10)}${h.replace('&','&amp;')}</h3>${l.length?`<ul>${l.map(x=>`<li><a href="#">${x}</a></li>`).join('')}</ul>`:''}</section>`).join(''));

define('page-tabs', `
:host{display:flex;border-bottom:1px solid #aab7b8;padding-left:2px;height:50px;align-items:flex-start;margin-right:1px;font-size:13px;font-weight:700;color:#545b64;white-space:nowrap}
button{display:flex;align-items:flex-start;height:49px;padding-top:6px;position:relative}
span{height:30px;line-height:30px;padding:0 21px;border-right:1px solid #aab7b8}
button:last-child span{border:0}
.on{color:#0073bb}.on span{padding-left:19px}
.on::after{content:"";position:absolute;left:0;right:1px;bottom:0;height:2px;background:#16191f}`,
['Details','Activity','Automatic scaling','Instance management','Monitoring','Instance refresh'].map((t,n)=>`<button role="tab" class="${n?'':'on'}"><span>${t}</span></button>`).join(''));

define('info-card', `
:host{display:block;background:#fff;border:1px solid #d5dbdb;border-top-color:#eaeded;border-bottom-color:#879596}
header{display:flex;align-items:center;justify-content:space-between;height:65px;padding:0 20px;background:#fafafa;border-bottom:1px solid #eaeded}
.body{padding:6px 9px 10px}`,
`<header><slot name="title"></slot><slot name="action"></slot></header><div class="body"><slot></slot></div>`);

define('key-value', `
:host{display:block;font-size:13px;line-height:22px}
dl{margin:0}dt{color:#545b64}dd{margin:2px 0 0;color:#16191f;white-space:nowrap;font-size:14px}`,
`<dl><dt><slot name="label"></slot></dt><dd><slot></slot></dd></dl>`);

const kv = (k,v) => `<key-value><span slot="label">${k}</span>${v}</key-value>`;
define('group-page', `
:host{display:block;padding:22px 38px 0 39px}
h1{margin:0 0 11px;font-size:27px;line-height:36px;font-weight:400}
info-card{margin-top:16px}
info-card+info-card{margin-top:20px}
h2{margin:0;font-size:17px;line-height:22px}
.edit{height:32px;min-width:69px;padding:0 20px;border:1px solid #545b64;border-radius:2px;background:#fff;color:#545b64;font-weight:700;font-size:14px}
.cols{display:grid;grid-template-columns:repeat(3,1fr)}
.col{display:flex;flex-direction:column;gap:20px;padding:10px;border-right:1px solid #eaeded;min-width:0}
.col:last-child{border:0}`,
`<h1>private-instances-for-project</h1><page-tabs></page-tabs>
<info-card><h2 slot="title">Group details</h2><button class="edit" slot="action">Edit</button>
<div class="cols"><div class="col">${kv('Desired capacity','2')}${kv('Minimum capacity','2')}${kv('Maximum capacity','2')}</div>
<div class="col">${kv('Auto Scaling group name','private-instances-for-project')}${kv('Date created','Tue Jan 10 2023 12:07:03 GMT+0100 (West<br>Africa Standard Time)')}${kv('Amazon Resource Name (ARN)','arn:aws:autoscaling:us-east-<br>1:605653682163:autoScalingGroup:17edda<br>66-daf3-4370-973e-<br>fa7baba131ed:autoScalingGroupName/priv<br>ate-instances-for-project')}</div><div class="col"></div></div></info-card>
<info-card></info-card>`);

define('aws-footer', `
:host{display:flex;align-items:center;justify-content:space-between;flex:none;height:29px;background:#232f3e;padding:0 15px 0 20px;color:#fff;font:bold 11px/16px "Noto Sans",sans-serif;white-space:nowrap}
div{display:flex;align-items:center;gap:24px}
p{margin:0;color:#95a5a6;font-weight:400;display:flex;gap:3px}
p span{font-size:12px}
p a{color:#fff;font-weight:700;display:flex;align-items:center;gap:2px}
.r span{margin-right:5px}`,
`<div><a href="#">Feedback</a><p><span>Looking for language selection? Find it in the new</span><a href="#">Unified Settings${ic('external',16)}</a></p></div>
<div class="r"><span>© 2023, Amazon Web Services, Inc. or its affiliates.</span><a href="#">Privacy</a><a href="#">Terms</a><a href="#">Cookie preferences</a></div>`);

const APPS = ['finder*','launchpad','safari','chrome*','mail','contacts','calendar','notes','maps','photos','reminders','messages','facetime','itunes*','ibooks','appstore','settings','word','powerpoint','excel*','communicator','outlook','people','download','remote','vlc*','terminal*','vscode*','preview*','|','clockfile','window1','window2','trash'];
define('mac-dock', `
:host{display:flex;flex:none;height:45px;padding:0 3px;background:linear-gradient(90deg,#85737c,#927a80 30%,#85727e);border-radius:4px 4px 0 0}
.app{flex:1;display:flex;flex-direction:column;align-items:center;padding-top:6px;min-width:0}
.run::after{content:"";width:4px;height:4px;border-radius:50%;background:#16080c;margin-top:3px}
.sep{width:17px;flex:none;display:flex;justify-content:center;padding:6px 0}
.sep::before{content:"";width:1px;background:#5b4850}`,
APPS.map(a=>a=='|'?'<div class="sep"></div>':`<div class="app ${a.endsWith('*')?'run':''}">${ic(a.replace('*',''),/window|remote/.test(a)?32:30)}</div>`).join(''));
</script>
</body>
</html>
